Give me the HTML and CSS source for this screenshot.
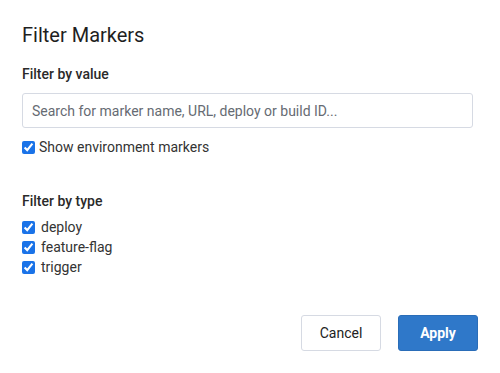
FILE: index.html
```html
<!DOCTYPE html>
<html lang="en">
<head>
    <meta charset="UTF-8">
    <meta name="viewport" content="width=device-width, initial-scale=1.0">
    <title>Filter Markers</title>
    <link rel="stylesheet" href="styles.css">
</head>
<body>
    <div class="dialog">
        <h1>Filter Markers</h1>

        <div class="secao">
            <div class="secao-titulo">Filter by value</div>
            <input class="busca" type="text" placeholder="Search for marker name, URL, deploy or build ID...">
            <label class="opcao"><input type="checkbox" checked> Show environment markers</label>
        </div>

        <div class="secao secao-tipo">
            <div class="secao-titulo">Filter by type</div>
            <label class="opcao"><input type="checkbox" checked> deploy</label>
            <label class="opcao"><input type="checkbox" checked> feature-flag</label>
            <label class="opcao"><input type="checkbox" checked> trigger</label>
        </div>

        <div class="acoes">
            <button class="botao botao-cancelar">Cancel</button>
            <button class="botao botao-aplicar">Apply</button>
        </div>
    </div>
</body>
</html>
```

FILE: styles.css
```css
body {
    font-family: Roboto, 'Liberation Sans', sans-serif;
    margin: 0;
    background-color: #fff;
    color: #222;
}
.dialog {
    padding: 22px 22px 0 22px;
    width: 456px;
}
h1 {
    font-size: 20px;
    font-weight: 400;
    margin: 0 0 17px 0;
    line-height: 26px;
    color: #1f1f1f;
}
.secao-titulo {
    font-size: 14px;
    font-weight: 500;
    line-height: 18px;
    margin-bottom: 10px;
    color: #2a2a2a;
}
.busca {
    box-sizing: border-box;
    width: 451px;
    height: 35px;
    padding: 0 9px;
    border: 1px solid #d6dae3;
    border-radius: 3px;
    font-family: Roboto, 'Liberation Sans', sans-serif;
    font-size: 14px;
    margin: 0 0 9px 0;
    outline: none;
}
.busca::placeholder {
    color: #666b73;
}
.opcao {
    display: flex;
    align-items: center;
    font-size: 14px;
    line-height: 20px;
    color: #333;
}
.opcao input {
    width: 13px;
    height: 13px;
    margin: 0 4px 0 0;
    accent-color: #1a73e8;
}
.secao-tipo {
    margin-top: 35px;
}
.secao-tipo .secao-titulo {
    margin-bottom: 7px;
}
.secao-tipo .opcao input {
    margin-right: 6px;
}
.acoes {
    display: flex;
    justify-content: flex-end;
    gap: 17px;
    margin-top: 38px;
}
.botao {
    font-family: Roboto, 'Liberation Sans', sans-serif;
    font-size: 14px;
    width: 80px;
    height: 36px;
    border-radius: 3px;
    cursor: pointer;
}
.botao-cancelar {
    background-color: #fff;
    border: 1px solid #d6dae3;
    color: #222;
}
.botao-aplicar {
    background-color: #2f78c9;
    border: 1px solid #2a6db8;
    color: #fff;
    font-weight: 700;
}
```
